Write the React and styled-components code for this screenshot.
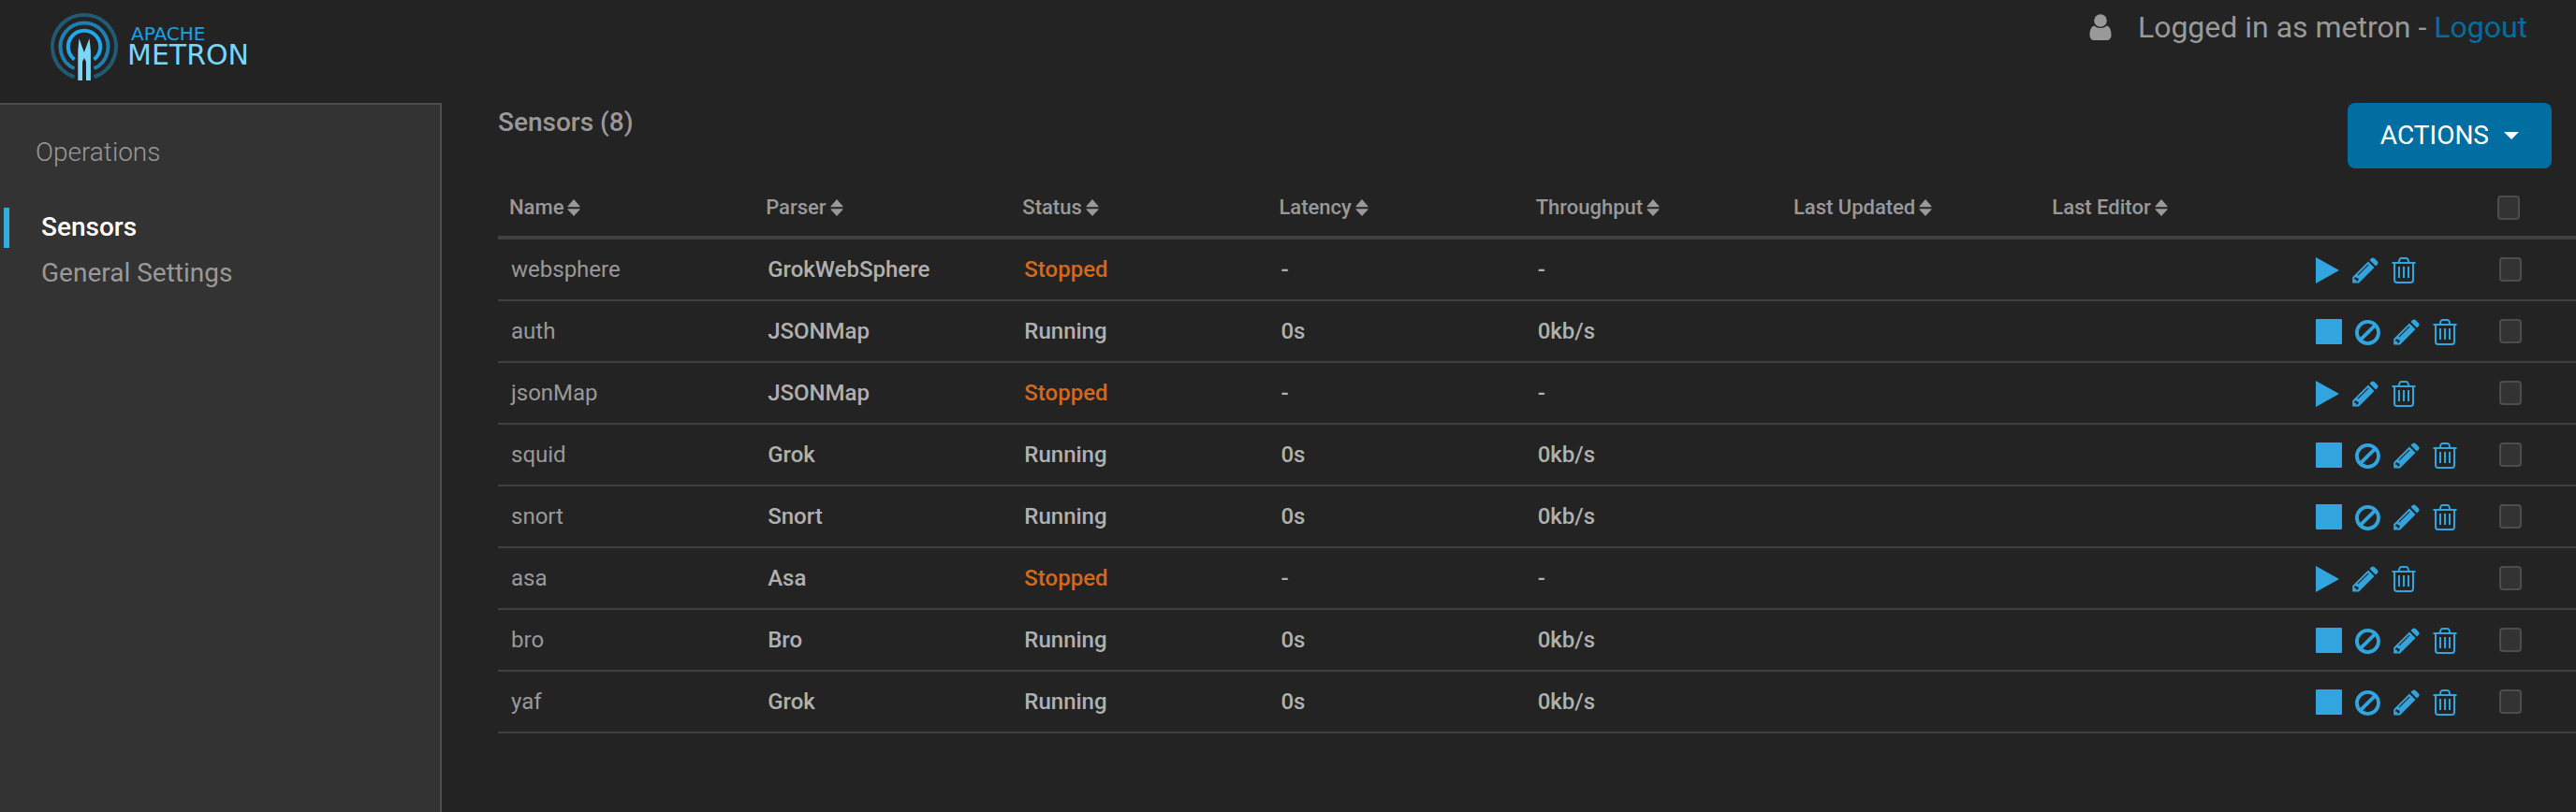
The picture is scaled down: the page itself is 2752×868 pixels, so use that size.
import React from "react";
import styled, { createGlobalStyle } from "styled-components";

const GlobalStyle = createGlobalStyle`
  *, *::before, *::after { box-sizing: border-box; }
  body {
    margin: 0;
    background: #232323;
    color: #999;
    font-family: Roboto, "Liberation Sans", sans-serif;
    font-size: 24px;
  }
`;

const Page = styled.div`
  display: flex;
  flex-direction: column;
  min-height: 100vh;
`;

const Header = styled.header`
  display: flex;
  justify-content: space-between;
  align-items: flex-start;
  height: 110px;
  padding: 8px 52px 0 52px;
`;

const Brand = styled.a`
  display: flex;
  padding-top: 4px;
  text-decoration: none;
`;

const LogoWords = styled.span`
  display: flex;
  flex-direction: column;
  padding: 14px 0 0 8px;
  font-family: "DejaVu Sans", sans-serif;
`;

const LogoTop = styled.span`
  padding-left: 4px;
  color: #1fa0e0;
  font-size: 20px;
  line-height: 20px;
`;

const LogoBottom = styled.span`
  color: #7dd6f7;
  font-size: 30px;
  line-height: 26px;
`;

const Account = styled.div`
  display: flex;
  align-items: center;
  gap: 28px;
  font-size: 32px;
  line-height: 42px;
`;

const LogoutLink = styled.a`
  color: #006ea0;
  text-decoration: none;
`;

const Body = styled.div`
  display: flex;
  flex: 1;
`;

const Sidebar = styled.nav`
  flex: 0 0 472px;
  padding: 34px 0 0 4px;
  background: #333;
  border: solid #4d4d4d;
  border-width: 2px 2px 0 0;
`;

const SidebarTitle = styled.h2`
  margin: 0 0 42px;
  padding-left: 34px;
  font-size: 28px;
  line-height: 34px;
  font-weight: 300;
`;

const NavList = styled.ul`
  margin: 0;
  padding: 0;
  list-style: none;
`;

const NavItem = styled.li`
  margin-bottom: 6px;
  padding-left: 34px;
  border-left: 6px solid ${(p) => (p.$active ? "#32abe2" : "transparent")};
  line-height: 42px;
`;

const NavLink = styled.a`
  color: ${(p) => (p.$active ? "#fff" : "#999")};
  font-size: 28px;
  font-weight: ${(p) => (p.$active ? 500 : 400)};
  text-decoration: none;
`;

const Main = styled.main`
  flex: 1;
  min-width: 0;
  padding-left: 60px;
`;

const TitleBar = styled.div`
  display: flex;
  justify-content: space-between;
  align-items: flex-start;
  padding-right: 26px;
`;

const Title = styled.h1`
  margin: 0;
  padding-top: 3px;
  font-size: 28px;
  line-height: 36px;
  font-weight: 500;
`;

const ActionsButton = styled.button`
  display: flex;
  align-items: center;
  gap: 16px;
  height: 70px;
  padding: 0 35px;
  border: 0;
  border-radius: 8px;
  background: #006ea0;
  color: #fff;
  font: 400 28px/40px Roboto, "Liberation Sans", sans-serif;
`;

const Table = styled.table`
  width: 100%;
  table-layout: fixed;
  border-collapse: separate;
  border-spacing: 0;
`;

const Col = styled.col`
  width: ${(p) => p.$w};
`;

const HeadCell = styled.th`
  height: 76px;
  padding: 12px 0 0 12px;
  border-bottom: 4px solid #404040;
  text-align: left;
  vertical-align: middle;
  white-space: nowrap;
`;

const SortButton = styled.button`
  display: flex;
  align-items: center;
  gap: 4px;
  padding: 0;
  border: 0;
  background: none;
  color: #999;
  font: 500 22px/32px Roboto, "Liberation Sans", sans-serif;
`;

const colors = { stopped: "#d2691e", name: "#999", normal: "#b0b0b0" };

const Cell = styled.td`
  height: 66px;
  padding: 0 0 0 14px;
  border-bottom: 2px solid #404040;
  color: ${(p) => colors[p.$tone || "normal"]};
  line-height: 32px;
  font-size: 24px;
  font-weight: ${(p) => (p.$tone === "name" ? 400 : 500)};
  vertical-align: middle;
`;

const IconCell = styled(Cell)`
  padding: 2px 0 0 12px;
`;

const IconRow = styled.div`
  display: flex;
  align-items: center;
  gap: 14px;
`;

const IconButton = styled.button`
  display: flex;
  padding: 0;
  border: 0;
  background: none;
  color: #32a5de;
`;

const Check = styled.input`
  appearance: none;
  display: block;
  width: 24px;
  height: 26px;
  margin: 0;
  border: 2px solid #4d4d4d;
  border-radius: 4px;
  background: #333;
`;

const LogoMark = () => (
  <svg width="76" height="76" viewBox="0 0 76 76" aria-hidden="true">
    <g fill="none">
      <path d="M27.500 70.300A34 34 0 1 1 48.500 70.300" stroke="#215a73" strokeWidth="4" />
      <path d="M27.500 61.300A25.500 25.500 0 1 1 48.500 61.300" stroke="#1f7fb0" strokeWidth="4" />
      <path d="M27.500 51.600A17.200 17.200 0 1 1 48.500 51.600" stroke="#1fa8ee" strokeWidth="4" />
    </g>
    <path fill="#7dd6f7" d="M31.300 74V42L32.500 29L37.900 44L43.500 29L44.900 42V74H40V54L38 50L36 54V74Z" />
  </svg>
);

const UserIcon = () => (
  <svg width="24" height="28" viewBox="0 0 24 28" fill="#999" aria-hidden="true">
    <circle cx="12" cy="7" r="6.800" />
    <path d="M5.500 12.500C1.500 13.500 0.500 18 0.500 22.500C0.500 26 2.500 28 5.500 28H18.500C21.500 28 23.500 26 23.500 22.500C23.500 18 22.500 13.500 18.500 12.500C16.500 14.300 14.500 15 12 15S7.500 14.300 5.500 12.500Z" />
  </svg>
);

const Caret = () => (
  <svg width="16" height="8" viewBox="0 0 16 8" fill="#fff" aria-hidden="true">
    <path d="M0 0H16L8 8Z" />
  </svg>
);

const SortIcon = () => (
  <svg width="14" height="18" viewBox="0 0 14 18" fill="currentColor" aria-hidden="true">
    <path d="M7 0L13.500 7.500V8.200H0.500V7.500ZM0.500 10.200H13.500V11L7 18L0.500 11Z" />
  </svg>
);

const icons = {
  Start: <svg width="25" height="28" viewBox="0 0 25 28" fill="currentColor"><path d="M0 0L25 14L0 28Z" /></svg>,
  Stop: <svg width="28" height="28" viewBox="0 0 28 28" fill="currentColor"><rect width="28" height="27" rx="1" /></svg>,
  Disable: (
    <svg width="27" height="27" viewBox="0 0 28 28" fill="none" stroke="currentColor" strokeWidth="4">
      <circle cx="14" cy="14" r="12" />
      <path d="M22.500 5.500L5.500 22.500" />
    </svg>
  ),
  Edit: (
    <svg width="28" height="28" viewBox="0 0 28 28" fill="currentColor">
      <path d="M18.500 3L20.500 1Q22 -0.200 23.500 1L27 4.500Q28.200 6 27 7.500L25 9.500Z" />
      <path fillRule="evenodd" d="M17 4.500L23.500 11L7 27.500H0.200V21.300ZM16.800 7.500L5.500 18.800L6.300 19.600L17.600 8.300ZM3.400 21L2.200 22.300V23.800H4V25.600H5.500L6.800 24.300L6.300 22.200L4.800 22.300Z" />
    </svg>
  ),
  Delete: (
    <svg width="26" height="28" viewBox="0 0 26 28" fill="none" stroke="currentColor" strokeWidth="2">
      <path d="M0.500 6H25.500M7.500 6L8.500 2.500Q9 1 10.500 1H15.500Q17 1 17.500 2.500L18.500 6M3 6V24Q3 27 5.500 27H20.500Q23 27 23 24V6M8 10V22M13 10V22M18 10V22" />
    </svg>
  ),
};

const columns = ["Name", "Parser", "Status", "Latency", "Throughput", "Last Updated", "Last Editor"];
const widths = ["12.35%", "12.35%", "12.35%", "12.35%", "12.4%", "12.45%", "auto", "194px", "96px"];

const sensors = [
  ["websphere", "GrokWebSphere", false],
  ["auth", "JSONMap", true],
  ["jsonMap", "JSONMap", false],
  ["squid", "Grok", true],
  ["snort", "Snort", true],
  ["asa", "Asa", false],
  ["bro", "Bro", true],
  ["yaf", "Grok", true],
];

const SensorRow = ({ name, parser, running }) => (
  <tr>
    <Cell $tone="name">{name}</Cell>
    <Cell>{parser}</Cell>
    <Cell $tone={running ? "normal" : "stopped"}>{running ? "Running" : "Stopped"}</Cell>
    <Cell>{running ? "0s" : "-"}</Cell>
    <Cell>{running ? "0kb/s" : "-"}</Cell>
    <Cell />
    <Cell />
    <IconCell>
      <IconRow>
        {(running ? ["Stop", "Disable", "Edit", "Delete"] : ["Start", "Edit", "Delete"]).map((a) => (
          <IconButton key={a} type="button" aria-label={`${a} ${name}`}>{icons[a]}</IconButton>
        ))}
      </IconRow>
    </IconCell>
    <Cell><Check type="checkbox" aria-label={`Select ${name}`} /></Cell>
  </tr>
);

export default function App() {
  return (
    <Page>
      <GlobalStyle />
      <Header>
        <Brand href="#">
          <LogoMark />
          <LogoWords>
            <LogoTop>APACHE</LogoTop>
            <LogoBottom>METRON</LogoBottom>
          </LogoWords>
        </Brand>
        <Account>
          <UserIcon />
          <span>Logged in as metron - <LogoutLink href="#logout">Logout</LogoutLink></span>
        </Account>
      </Header>
      <Body>
        <Sidebar>
          <SidebarTitle>Operations</SidebarTitle>
          <NavList>
            <NavItem $active><NavLink $active href="#sensors">Sensors</NavLink></NavItem>
            <NavItem><NavLink href="#settings">General Settings</NavLink></NavItem>
          </NavList>
        </Sidebar>
        <Main>
          <TitleBar>
            <Title>Sensors (8)</Title>
            <ActionsButton type="button">ACTIONS <Caret /></ActionsButton>
          </TitleBar>
          <Table>
            <colgroup>{widths.map((w, i) => <Col key={i} $w={w} />)}</colgroup>
            <thead>
              <tr>
                {columns.map((c) => (
                  <HeadCell key={c}><SortButton type="button">{c}<SortIcon /></SortButton></HeadCell>
                ))}
                <HeadCell />
                <HeadCell><Check type="checkbox" aria-label="Select all sensors" /></HeadCell>
              </tr>
            </thead>
            <tbody>
              {sensors.map(([name, parser, running]) => (
                <SensorRow key={name} name={name} parser={parser} running={running} />
              ))}
            </tbody>
          </Table>
        </Main>
      </Body>
    </Page>
  );
}
